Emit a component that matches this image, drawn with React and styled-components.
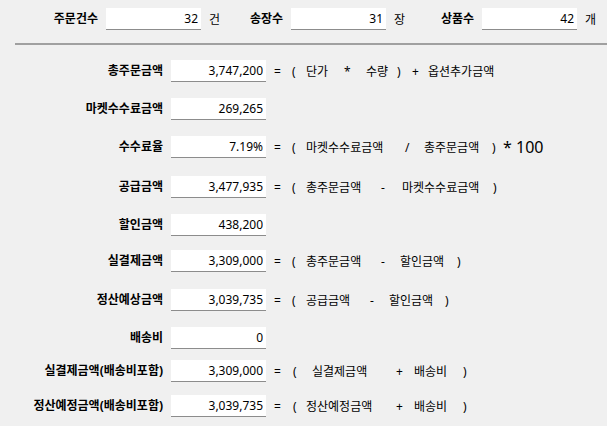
import React from 'react'
import styled, { createGlobalStyle } from 'styled-components'

const GlobalStyle = createGlobalStyle`
    html, body {
        margin: 0;
        background: #f0f0f0;
    }
    body {
        font-family: "Noto Sans", "Noto Sans CJK KR", sans-serif;
        font-size: 12px;
        color: #000;
    }
`

const Page = styled.div`
    width: 607px;
    height: 426px;
    overflow: hidden;
    padding-top: 8px;
    box-sizing: border-box;
`

const Header = styled.div`
    display: flex;
    align-items: center;
    height: 22px;
`

const Label = styled.label`
    width: ${p => p.$w}px;
    flex-shrink: 0;
    text-align: right;
    font-weight: 700;
    white-space: nowrap;
    line-height: 22px;
`

const Box = styled.input`
    width: 95px;
    height: 22px;
    flex-shrink: 0;
    box-sizing: border-box;
    margin: 0 0 0 8px;
    padding: 0 3px 0 0;
    border: none;
    border-bottom: 1px solid #8c8c8c;
    background: #fff;
    text-align: right;
    font: inherit;
    color: #000;
    outline: none;
`

const Unit = styled.span`
    width: 12px;
    margin-left: 8px;
    flex-shrink: 0;
`

const Divider = styled.div`
    height: 2px;
    background: #a0a0a0;
    margin: 13px 0 0 15px;
`

const Rows = styled.div`
    display: flex;
    flex-direction: column;
    margin-top: 15px;
`

const Row = styled.div`
    display: flex;
    align-items: center;
    height: 22px;
    margin-top: ${p => p.$gap}px;
`

const Formula = styled.div`
    display: flex;
    align-items: center;
    margin-left: 8px;
    white-space: pre;
`

const Token = styled.span`
    width: ${p => (p.$w ? p.$w + 'px' : 'auto')};
    flex-shrink: 0;
    font-size: ${p => (p.$big ? 16 : 12)}px;
`

const FORMULA_START = 274

const rows = [
    { label: '총주문금액', value: '3,747,200', gap: 0,
      f: [['=', 275], ['(', 292], ['단가', 306], ['*', 344], ['수량', 366], [')', 397], ['+', 412], ['옵션추가금액', 428]] },
    { label: '마켓수수료금액', value: '269,265', gap: 16 },
    { label: '수수료율', value: '7.19%', gap: 16,
      f: [['=', 275], ['(', 292], ['마켓수수료금액', 306], ['/', 405], ['총주문금액', 424], [')', 492], ['* 100', 503, true]] },
    { label: '공급금액', value: '3,477,935', gap: 18,
      f: [['=', 275], ['(', 292], ['총주문금액', 306], ['-', 381], ['마켓수수료금액', 402], [')', 493]] },
    { label: '할인금액', value: '438,200', gap: 16 },
    { label: '실결제금액', value: '3,309,000', gap: 14,
      f: [['=', 275], ['(', 292], ['총주문금액', 306], ['-', 381], ['할인금액', 400], [')', 457]] },
    { label: '정산예상금액', value: '3,039,735', gap: 17,
      f: [['=', 275], ['(', 292], ['공급금액', 306], ['-', 370], ['할인금액', 389], [')', 445]] },
    { label: '배송비', value: '0', gap: 16 },
    { label: '실결제금액(배송비포함)', value: '3,309,000', gap: 11,
      f: [['=', 275], ['(', 293], ['실결제금액', 312], ['+', 396], ['배송비', 414], [')', 463]] },
    { label: '정산예정금액(배송비포함)', value: '3,039,735', gap: 13,
      f: [['=', 275], ['(', 293], ['정산예정금액', 306], ['+', 396], ['배송비', 414], [')', 463]] },
]

function FormulaText({ tokens }) {
    return (
        <Formula>
            {tokens.map(([text, x, big], i) => {
                const start = i === 0 ? FORMULA_START : x
                const next = tokens[i + 1]
                return (
                    <Token key={i} $w={next ? next[1] - start : 0} $big={big}>
                        {text}
                    </Token>
                )
            })}
        </Formula>
    )
}

export default function App() {
    return (
        <Page>
            <GlobalStyle />
            <Header>
                <Label $w={98}>주문건수</Label>
                <Box readOnly value="32" />
                <Unit>건</Unit>
                <Label $w={62}>송장수</Label>
                <Box readOnly value="31" />
                <Unit>장</Unit>
                <Label $w={68}>상품수</Label>
                <Box readOnly value="42" />
                <Unit>개</Unit>
            </Header>

            <Divider />

            <Rows>
                {rows.map(r => (
                    <Row key={r.label} $gap={r.gap}>
                        <Label $w={163}>{r.label}</Label>
                        <Box readOnly value={r.value} />
                        {r.f && <FormulaText tokens={r.f} />}
                    </Row>
                ))}
            </Rows>
        </Page>
    )
}
